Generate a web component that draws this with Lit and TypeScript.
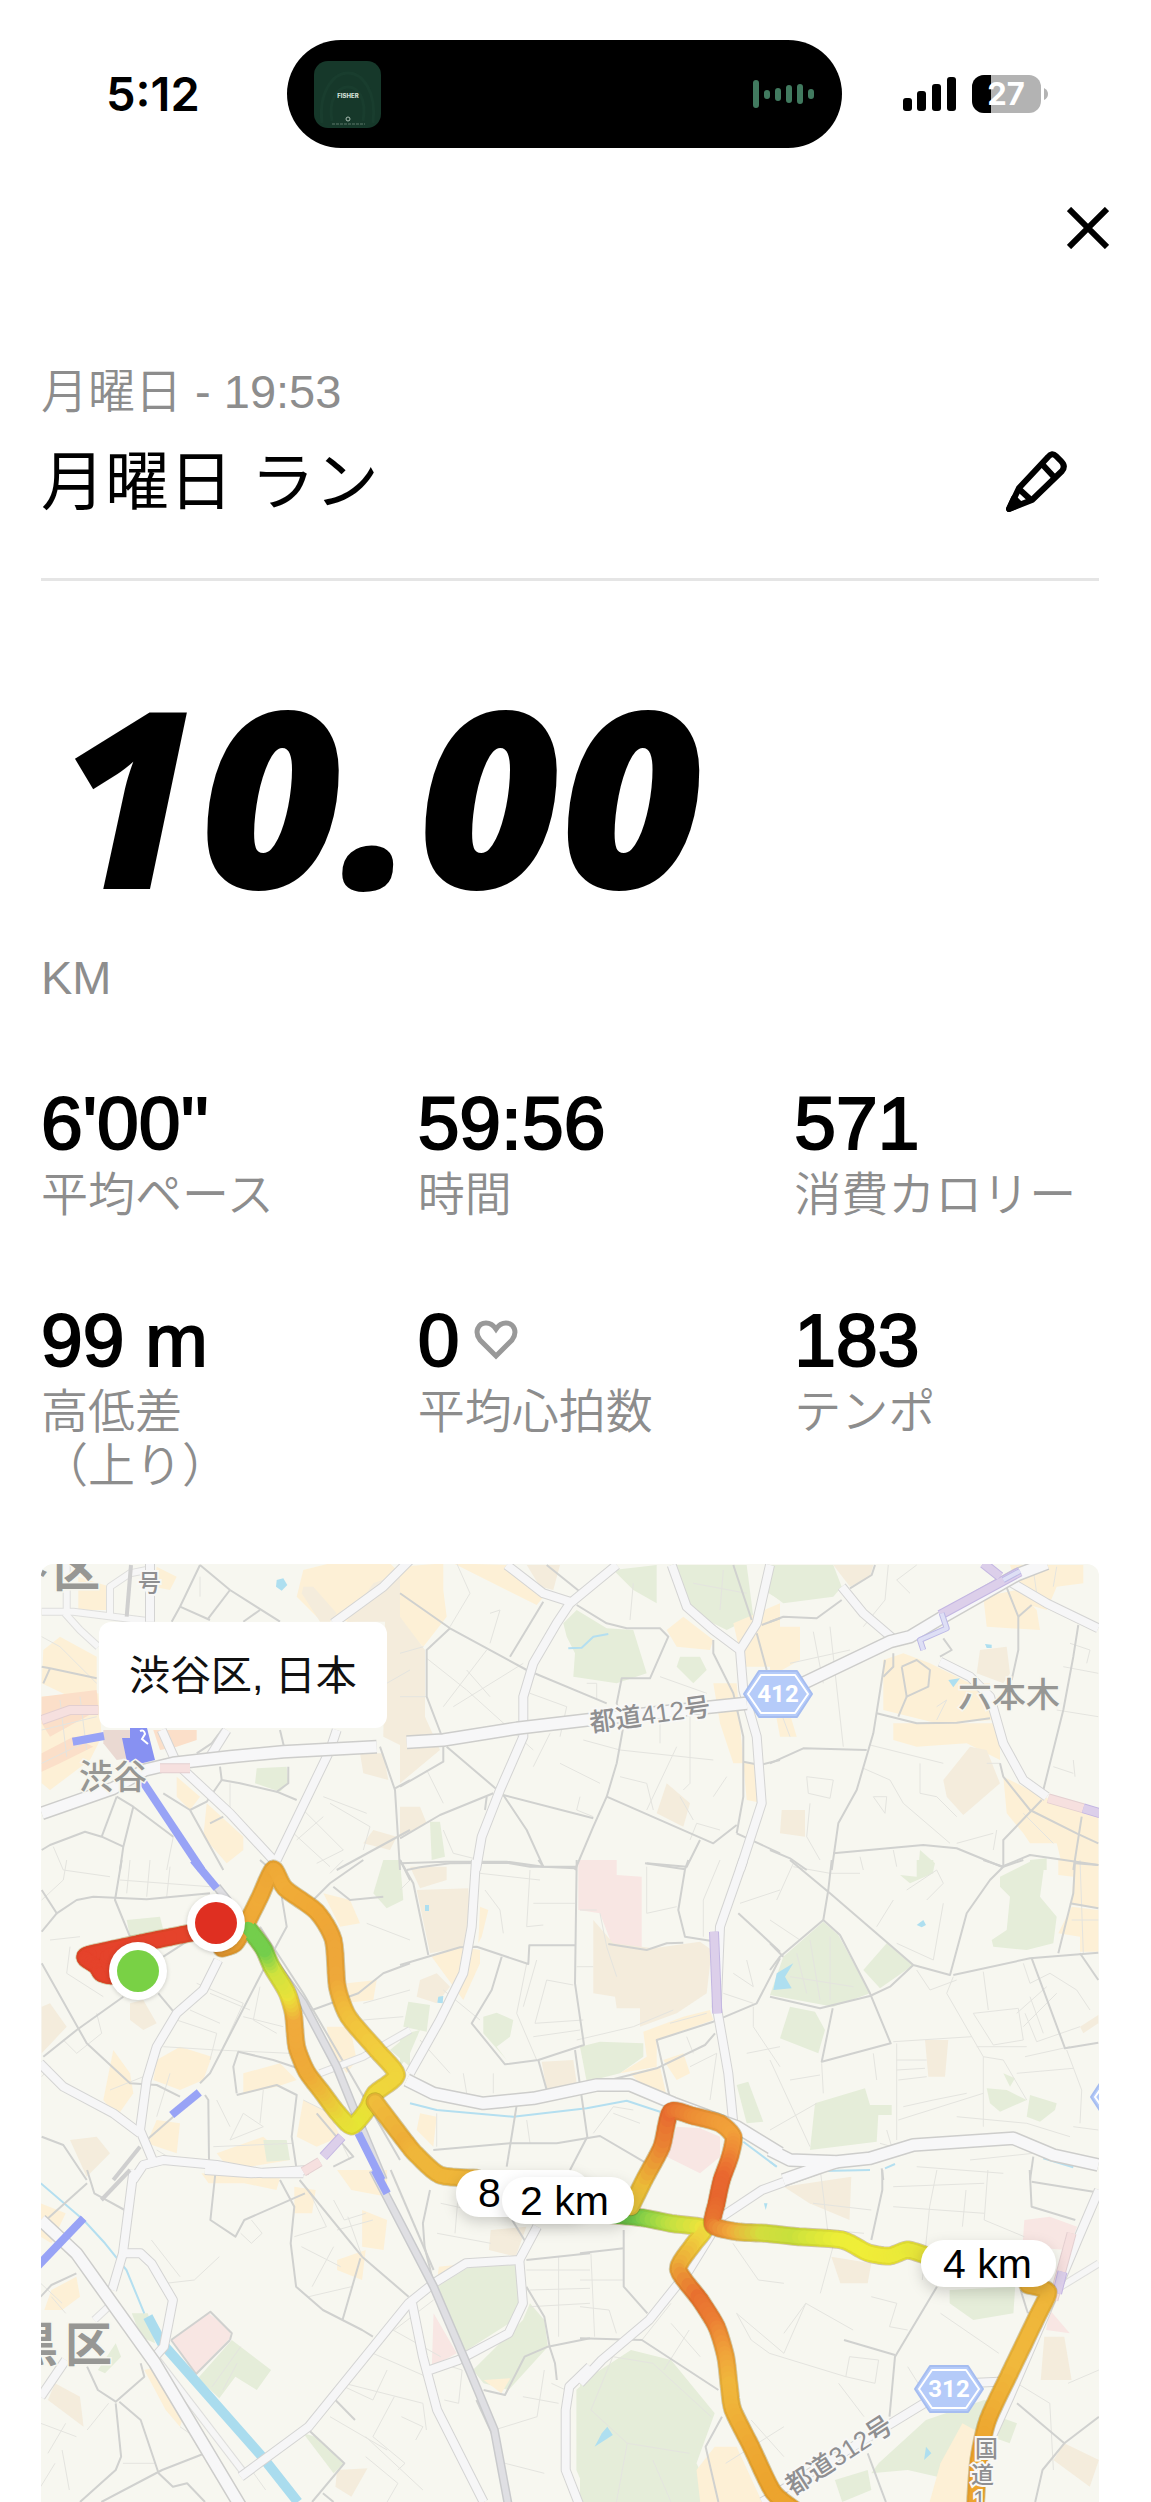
import { LitElement, html, css, svg } from "lit";
import { customElement } from "lit/decorators.js";

type Pt = [number, number];
type Area = [string, string];
type Line = [string, string];

interface Tile {
  x: number;
  y: number;
  sx: number;
  areas: Area[];
  lines: Line[];
}

/* Area fills by land use. */
const LAND: Record<string, string> = {
  y: "#fdf0d6",
  b: "#f4ecdc",
  g: "#e5edd9",
  p: "#f8e6e3",
  o: "#fbdfc9",
  s: "#ead9d2",
  w: "#aedff0",
  v: "#8791f2",
};

/* Line styles: casing colour, casing width, fill colour, fill width. */
const LINE: Record<string, [string, number, string, number]> = {
  n: ["", 0, "#e4e4df", 1],
  m: ["", 0, "#d0d1cf", 2],
  a: ["#dededc", 8, "#f6f6f6", 6],
  c: ["#d4d4d3", 10, "#f6f6f7", 8],
  e: ["#cdcdcb", 14, "#f7f7f8", 11],
  r: ["#c9cacc", 9, "#dfdfe3", 6],
  k: ["", 0, "#cfcfcf", 4],
  u: ["", 0, "#98a3f6", 8],
  l: ["#c3b6e2", 10, "#dccfea", 8],
  t: ["#bdb9e6", 6, "#dedff5", 4],
  q: ["#e3cfd0", 10, "#f6e0df", 8],
  h: ["", 0, "#b4dff0", 2],
  i: ["", 0, "#aadcee", 10],
};

const TILES: Tile[] = [
  {
    x: 30, y: 1550, sx: 3,
    areas: [
      ["y", "820,60 900,40 1080,40 1140,100 1140,200 960,215 860,200 800,140"],
      ["b", "950,215 1030,100 1140,60 1140,600 1060,560 1065,215"],
      ["b", "820,110 850,110 920,190 900,215 870,215 815,130"],
      ["y", "40,300 90,260 200,320 200,420 120,440 35,400"],
      ["y", "35,440 205,430 215,560 180,630 60,720 35,700"],
      ["o", "35,440 200,420 205,480 60,560 35,520"],
      ["o", "35,610 130,560 190,590 90,640 35,665"],
      ["y", "145,80 240,110 230,180 145,180"],
      ["y", "380,50 440,80 420,120 370,110"],
      ["y", "440,680 510,740 480,780 440,740"],
      ["y", "530,760 640,860 640,900 590,940 520,860"],
      ["g", "680,655 770,650 775,700 750,725 675,700"],
      ["w", "740,90 760,85 772,105 755,122 738,110"],
      ["s", "220,540 310,540 330,620 260,630 220,580"],
      ["o", "370,540 500,540 500,570 440,590 390,600"],
      ["b", "990,610 1060,610 1075,690 1000,670"],
      ["b", "1030,840 1100,860 1080,900 1000,880"],
    ],
    lines: [
      ["n", "35,260 90,290 200,400"], ["n", "90,450 110,620"], ["n", "150,440 170,600"], ["n", "35,640 200,560"],
      ["n", "35,540 200,500"], ["n", "900,760 1020,830 1000,900"], ["n", "820,780 940,900 860,940"], ["n", "780,840 900,950"],
      ["n", "880,740 1010,790"], ["n", "600,700 600,790"], ["n", "430,860 410,960"], ["n", "70,890 100,960"],
      ["n", "960,230 1060,330"], ["n", "1070,400 1140,360"], ["n", "510,80 510,140"], ["n", "800,870 880,800"],
      ["m", "510,45 600,120 750,215"], ["m", "510,45 450,170 425,215"], ["m", "450,170 540,210"], ["m", "600,120 535,205"],
      ["m", "690,180 640,215"], ["k", "303,45 290,200"], ["m", "1050,590 1095,720 1110,960"], ["m", "1095,715 1140,690"],
      ["m", "570,650 575,690 630,700 740,725 775,700 775,650"], ["m", "740,725 800,750"],
      ["m", "35,900 60,885 165,845 215,860 280,890"], ["m", "260,740 215,860"], ["m", "310,770 280,890 270,960"],
      ["m", "260,740 310,770 430,860"], ["m", "400,730 480,780 580,960"], ["m", "480,780 530,755 575,690"],
      ["m", "35,350 60,355 200,385"], ["m", "60,355 40,400"], ["m", "540,820 580,800"], ["m", "750,540 762,590"],
      ["m", "500,610 545,580 575,540"], ["m", "920,960 1140,840"],
      ["a", "110,40 110,180"], ["a", "240,200 240,110 300,70 350,60"], ["a", "35,185 130,185 370,215"],
      ["a", "105,190 150,240 205,290"], ["c", "360,40 360,215"],
      ["c", "740,930 900,600 920,540"], ["c", "910,220 1060,110 1140,30"], ["c", "395,540 440,640"], ["c", "590,540 540,620"],
      ["e", "35,790 250,715 345,660 430,640 600,620 760,605 1040,590"], ["c", "450,650 600,790 730,930"],
      ["q", "390,655 480,655"], ["q", "35,510 120,480 205,480"],
      ["u", "335,690 515,960"], ["u", "128,575 222,558"],
    ],
  },
  {
    x: 400, y: 1550, sx: 3,
    areas: [
      ["y", "0,50 130,40 130,120 140,200 70,290 0,220"],
      ["y", "320,45 440,130 410,165 200,60 160,40"],
      ["b", "0,200 75,300 75,500 120,600 0,700"],
      ["b", "380,45 480,45 460,120 420,110"],
      ["g", "530,180 620,235 700,240 740,370 650,400 520,380 525,310 500,260 490,220"],
      ["g", "640,60 770,45 770,160 700,120"],
      ["g", "830,45 1040,45 1060,200 980,240 900,200 860,160"],
      ["g", "1100,45 1140,45 1140,150 1090,120"],
      ["g", "840,320 900,320 920,360 880,400 830,350"],
      ["y", "800,240 850,200 940,270 930,300 830,290"],
      ["y", "1000,220 1140,160 1140,350 1030,350"],
      ["y", "940,400 1010,400 1030,640 1000,640 960,520"],
      ["y", "1030,640 1080,640 1090,760 1040,750"],
      ["b", "800,700 870,760 850,830 770,790"],
      ["b", "0,770 60,770 80,820 0,860"],
      ["g", "90,815 120,815 135,920 95,930"],
    ],
    lines: [
      ["n", "80,325 200,420 400,600"], ["n", "130,470 260,300"], ["n", "160,470 370,340"], ["n", "170,40 210,130 150,230"],
      ["n", "660,680 740,700 760,780"], ["n", "780,490 780,580"], ["n", "870,500 870,700 850,720"], ["n", "550,570 660,600 940,630"],
      ["n", "480,640 600,700"], ["n", "130,840 160,910 240,930"], ["n", "540,740 530,780 580,800"], ["n", "390,430 500,470 480,560"],
      ["n", "200,360 270,440"], ["n", "690,210 700,100"], ["n", "780,380 920,430"], ["n", "830,590 740,780"],
      ["n", "270,190 300,180 270,280"], ["n", "560,400 590,400 590,450"], ["n", "870,870 890,820 960,840"], ["n", "970,60 960,180"],
      ["n", "880,100 1040,130"], ["n", "80,660 130,760"], ["n", "0,310 70,290"], ["n", "0,440 80,440"],
      ["n", "450,550 400,650"], ["n", "840,740 880,810"], ["n", "980,680 940,740"],
      ["h", "505,295 545,293 580,260 625,252"],
      ["m", "440,45 540,125"], ["m", "0,130 150,235 380,360 620,460"],
      ["m", "150,235 80,300 80,440 130,570 130,635 0,710"], ["m", "430,155 330,320"],
      ["m", "530,165 620,220 680,235 780,235 805,260 750,385 665,385 650,460 670,530 650,640 620,740 580,830 525,960"],
      ["m", "140,590 310,735 580,805"], ["m", "310,735 380,840 430,950"], ["m", "0,865 120,795 280,730"],
      ["m", "620,740 940,880 1010,825"], ["m", "1010,850 1140,910"], ["m", "940,270 940,310 1000,430 1030,560 1030,740 1010,850"],
      ["m", "1000,45 1055,210"], ["m", "1070,250 1100,360"], ["m", "1140,205 1085,225"], ["m", "1030,635 1080,645 1140,630"],
      ["m", "0,940 140,935 320,935 430,950 525,955"], ["m", "900,870 860,950 740,940"], ["m", "260,740 255,780"],
      ["c", "320,45 430,130 510,155"], ["c", "228,960 245,860 300,720 370,560 370,440 400,340 470,220 510,160 650,45"],
      ["e", "20,577 130,570 350,535 560,510 1040,460"],
      ["c", "1020,300 1070,220 1110,45"], ["c", "815,45 860,170 940,240 1020,300 1030,420 1070,560 1085,760 1020,960"],
    ],
  },
  {
    x: 770, y: 1550, sx: 3,
    areas: [
      ["g", "0,45 190,45 215,110 190,140 40,160 0,130"],
      ["b", "190,45 310,45 300,80 240,110"],
      ["y", "0,230 90,230 90,330 0,380"],
      ["y", "340,330 400,310 480,340 600,400 660,400 670,510 500,520 340,480"],
      ["y", "370,520 690,520 690,630 590,580 440,590 370,570"],
      ["b", "600,590 650,600 690,700 580,795 530,740 520,690"],
      ["b", "630,300 710,290 720,370 700,400 620,370"],
      ["y", "720,45 940,45 940,100 860,110 830,180 760,160 740,110"],
      ["y", "640,140 740,120 800,180 810,240 650,230"],
      ["y", "700,680 820,740 985,800 985,960 880,960 860,880 780,880 760,850 710,790"],
      ["b", "35,780 105,780 105,860 30,850"],
      ["g", "450,900 495,940 490,960 445,960"],
      ["g", "780,930 830,925 830,960 780,960"],
      ["y", "0,400 50,460 80,560 30,560"],
      ["w", "645,282 665,284 665,294 650,294"],
      ["w", "535,390 570,385 550,412"],
    ],
    lines: [
      ["n", "280,655 360,690 400,760 540,880"], ["n", "300,585 520,640"], ["n", "450,640 450,730 500,740 560,800"],
      ["n", "670,850 560,880"], ["n", "680,840 670,900"], ["n", "180,230 220,590"], ["n", "130,245 160,400"], ["n", "0,400 60,560"],
      ["n", "110,680 190,690 180,745 115,730 110,680"], ["n", "310,740 350,740 345,790 310,740"], ["n", "880,350 985,370"],
      ["n", "860,480 985,500"], ["n", "850,650 910,670"], ["n", "355,45 345,150 280,230"], ["n", "900,280 960,300 950,340"],
      ["n", "60,340 240,300"], ["n", "120,760 110,860 150,930"], ["n", "500,470 530,450 500,510"], ["n", "440,45 380,90 420,130"],
      ["n", "910,630 915,680"], ["n", "270,920 280,960"], ["n", "380,950 370,900"], ["n", "790,60 800,130"], ["n", "860,50 850,110"],
      ["n", "650,640 690,640"], ["n", "985,230 940,225"], ["n", "760,790 850,880"],
      ["m", "0,215 40,200 140,205 215,150"], ["m", "240,115 305,75 315,45"],
      ["m", "345,330 310,550 260,720 205,820 185,960"], ["m", "0,640 100,595 290,600"],
      ["m", "320,490 440,520 560,518 660,505"], ["m", "395,350 440,330 480,360 475,410 410,440 395,350"], ["m", "410,440 385,500"],
      ["m", "370,310 370,350 340,380"], ["m", "520,265 545,300 510,320"], ["m", "705,100 745,200 745,300 725,390"],
      ["m", "785,165 745,200"], ["m", "925,225 910,320 880,480 820,720"], ["m", "690,640 700,680 780,780 920,850 985,880"],
      ["m", "815,750 700,870 700,950"], ["m", "935,800 910,960"], ["m", "190,910 460,885 560,895 695,950 780,915 985,945"],
      ["m", "0,900 60,925 110,960"],
      ["c", "215,110 280,190 380,275"], ["e", "100,400 360,275 420,260 520,200 740,75 830,40"],
      ["c", "720,95 830,160 985,235"], ["c", "510,335 600,380 660,440 700,580 760,690 830,740"],
      ["q", "835,745 940,775"], ["l", "640,40 690,80"], ["l", "510,195 750,65"], ["t", "460,300 450,270 530,235 515,190"],
      ["t", "700,90 750,63"], ["l", "940,775 990,790"],
    ],
  },
  {
    x: 30, y: 1860, sx: 3,
    areas: [
      ["b", "35,440 60,430 110,500 35,580"],
      ["b", "300,430 340,420 380,490 340,510 300,480"],
      ["g", "290,180 390,170 400,210 300,230"],
      ["y", "250,570 300,640 310,700 260,770 220,720"],
      ["y", "380,600 450,560 545,590 520,660 450,690 370,660"],
      ["y", "640,640 750,610 800,660 740,680 640,700"],
      ["y", "890,500 960,500 980,600 950,640 900,560"],
      ["y", "880,100 960,120 990,190 930,200"],
      ["g", "1060,0 1110,0 1120,120 1070,145 1030,100"],
      ["g", "1140,520 1140,620 1080,570"],
      ["y", "380,780 450,790 440,880 350,850"],
      ["b", "120,840 200,830 240,880 170,950"],
      ["y", "560,880 700,830 780,900 600,930"],
      ["g", "700,840 770,840 780,900 710,905"],
      ["y", "950,370 1040,360 1030,420 940,430"],
      ["y", "820,720 900,760 930,830 860,860 800,830"],
    ],
    lines: [
      ["n", "100,30 240,50"], ["n", "35,120 100,60 110,0"], ["n", "300,0 290,100"], ["n", "360,0 350,110"], ["n", "420,20 410,110"],
      ["n", "270,60 540,80"], ["n", "120,260 110,340 220,410"], ["n", "60,240 150,230"], ["n", "440,480 560,520 540,600"],
      ["n", "480,450 570,490"], ["n", "540,400 660,450"], ["n", "500,370 640,430 580,560"], ["n", "640,470 760,500"],
      ["n", "690,380 670,480 740,520"], ["n", "400,560 560,570 780,580"], ["n", "200,460 215,520 140,580 100,540"],
      ["n", "240,690 340,650"], ["n", "640,760 600,840 700,800 640,760"], ["n", "560,720 600,800"], ["n", "700,690 690,790"],
      ["n", "550,860 790,850"], ["n", "820,720 900,760"], ["n", "60,620 35,650"], ["n", "1000,430 1140,390"], ["n", "1010,190 1140,240"],
      ["n", "940,860 960,900"], ["n", "380,870 430,900"], ["n", "900,40 940,0"], ["n", "420,640 380,770"], ["n", "1000,480 1120,470"],
      ["m", "35,90 80,160 140,120 190,110 350,118 540,100"], ["m", "275,0 255,120 300,230"], ["m", "80,160 35,215"],
      ["m", "35,310 170,550 300,670 380,675 450,710"], ["m", "40,590 140,510 280,410"], ["m", "385,400 435,460"],
      ["m", "400,290 470,245"], ["m", "500,0 640,180"], ["m", "690,0 840,130 900,70 1000,0"], ["m", "755,110 770,200 700,330 540,640 510,670"],
      ["m", "525,705 535,720 537,900"], ["m", "620,700 610,620 625,575 730,600 820,630"], ["m", "620,705 740,675 800,705 785,830 800,930"],
      ["m", "820,460 985,400 1060,340 1140,310"], ["m", "910,80 960,120 1060,110"], ["m", "1110,0 1140,60"],
      ["m", "35,830 100,855 170,960"], ["k", "330,860 250,960"], ["m", "430,770 350,840"], ["m", "910,920 970,890 860,760"],
      ["a", "870,640 1000,590 1140,510"],
      ["c", "565,300 520,390 440,460 380,560 350,660 330,810 370,905"], ["c", "30,610 100,680 250,760 330,820"],
      ["c", "310,960 340,915 400,900 560,915 700,940 820,940"],
      ["r", "560,80 640,180 820,430 920,620 985,780 1060,960"],
      ["m", "690,200 820,400 960,640 1110,900"],
      ["u", "490,0 560,85"], ["u", "425,765 508,697"], ["u", "985,820 1055,960"], ["l", "935,830 880,890"], ["q", "870,905 820,935"],
    ],
  },
  {
    x: 400, y: 1860, sx: 3,
    areas: [
      ["p", "535,0 650,0 650,45 725,50 725,265 640,265 600,160 535,150"],
      ["b", "50,90 205,85 210,150 195,260 90,280"],
      ["b", "30,20 140,20 140,60 60,85"],
      ["y", "240,140 265,150 245,230 235,250"],
      ["y", "95,290 180,260 240,270 240,310 190,420"],
      ["b", "60,360 110,340 150,380 110,430 50,410"],
      ["b", "580,180 640,250 760,265 900,245 935,270 920,400 830,460 720,500 720,445 650,445 645,410 580,400"],
      ["g", "25,425 90,435 80,515 10,500"],
      ["g", "0,525 60,510 30,580 0,620"],
      ["g", "250,470 290,458 340,480 330,530 290,560 320,600 250,520"],
      ["b", "425,605 520,600 530,670 440,690"],
      ["g", "540,560 600,545 730,550 730,590 660,640 560,665"],
      ["y", "730,515 850,470 930,450 940,480 770,540 770,620 660,640 740,590"],
      ["y", "690,640 780,620 800,710 720,670"],
      ["y", "790,600 850,580 870,640 830,660"],
      ["g", "1010,675 1045,665 1090,785 1040,790"],
      ["p", "830,800 900,805 960,830 960,890 900,940 800,890"],
      ["y", "60,760 110,770 100,860 50,810"],
      ["w", "75,135 87,135 87,153 75,153"],
      ["w", "115,410 130,408 128,430 112,428"],
    ],
    lines: [
      ["n", "255,90 300,150 310,220"], ["n", "390,30 380,200 430,195"], ["n", "400,130 525,130"], ["n", "380,310 350,460 410,600"],
      ["n", "440,360 520,375"], ["n", "440,360 405,490 550,480"], ["n", "530,540 700,500 820,450"], ["n", "970,400 1060,430"],
      ["n", "1060,440 1060,500 1140,620"], ["n", "740,160 830,140"], ["n", "910,230 910,120 960,0"], ["n", "190,640 200,700"],
      ["n", "280,640 280,700"], ["n", "1040,300 1060,380 1000,340"], ["n", "240,40 420,60"], ["n", "530,320 580,320"],
      ["n", "130,390 240,480"], ["n", "410,300 370,440"], ["n", "600,160 620,260 650,350"], ["n", "810,490 920,460"],
      ["n", "860,530 880,580"], ["n", "60,540 150,640"], ["n", "110,760 110,860"], ["n", "380,780 390,850"], ["n", "640,760 720,790"],
      ["n", "580,820 640,740 700,750"], ["n", "1020,130 1140,90"], ["n", "0,90 30,60"], ["n", "540,150 590,150"], ["n", "400,530 540,510"],
      ["n", "870,620 950,580 930,720"], ["n", "740,20 740,160"], ["n", "1040,580 1140,560"],
      ["h", "30,730 110,750 340,770 560,745 680,722 780,755"], ["h", "1030,845 1130,920"],
      ["m", "20,30 60,22 150,10 320,8 390,20 530,20"], ["m", "0,0 40,70 85,285"], ["m", "0,315 180,262 230,260 385,312 388,256 525,256"],
      ["m", "415,0 430,20"], ["m", "530,0 525,370 552,555 415,600 315,613 215,490 275,390 305,290"], ["m", "415,600 440,690"],
      ["m", "525,570 562,830 510,930"], ["m", "350,735 320,920"], ["m", "100,870 330,850 470,850 600,828 740,910"],
      ["m", "735,10 855,28 835,150 855,230 935,243"], ["m", "865,0 855,28"], ["m", "625,252 740,270 800,250 850,248"],
      ["m", "1015,160 1140,275"], ["m", "1140,295 1070,430 940,485 770,540 810,715"], ["m", "550,680 770,625 915,555 945,520"],
      ["c", "228,0 215,200 190,340 120,480 30,640"], ["c", "1030,0 960,200 950,440 985,640 1000,790"],
      ["e", "20,660 100,700 250,730 400,715 590,675 690,675 820,730 1010,800 1140,880"],
      ["l", "942,215 952,460"],
    ],
  },
  {
    x: 770, y: 1860, sx: 3,
    areas: [
      ["g", "160,185 205,225 300,400 190,440 0,405 40,290"],
      ["g", "350,250 430,315 330,385 280,330"],
      ["g", "390,45 440,50 440,0 490,0 490,40 420,70"],
      ["g", "690,50 790,0 825,0 810,110 860,170 850,250 770,270 670,260 665,240 710,210 720,110 690,80"],
      ["g", "60,440 135,455 165,510 145,580 30,535"],
      ["g", "135,730 285,685 300,735 365,735 365,765 325,765 320,845 120,870"],
      ["b", "465,540 535,540 525,650 475,650"],
      ["g", "650,685 710,690 770,720 690,755 660,730"],
      ["g", "780,705 860,730 855,750 810,785 770,770"],
      ["g", "700,640 735,655 720,680"],
      ["y", "865,0 985,0 985,145 905,135 910,50 865,45"],
      ["y", "905,140 985,150 985,275 930,275 930,230 865,220"],
      ["b", "930,500 985,465 985,490 940,520"],
      ["w", "20,340 70,310 45,350 65,385 10,390"],
      ["w", "440,195 460,180 468,195 455,202"],
    ],
    lines: [
      ["n", "380,550 380,840"], ["n", "550,350 530,400 640,590 700,600 770,720"], ["n", "610,460 745,445 760,540 670,555 610,460"],
      ["n", "310,580 320,660"], ["n", "155,610 160,700"], ["n", "370,545 605,530"], ["n", "0,600 120,860"], ["n", "0,810 140,730"],
      ["n", "385,660 470,650"], ["n", "400,740 490,720 590,700"], ["n", "640,590 640,800"], ["n", "765,460 800,545 930,500"],
      ["n", "765,590 900,560"], ["n", "740,640 910,625"], ["n", "890,570 935,690 930,790"], ["n", "0,180 90,240"], ["n", "20,120 70,10"],
      ["n", "320,200 370,120"], ["n", "490,300 520,130"], ["n", "380,250 490,300"], ["n", "640,700 385,780"], ["n", "640,335 655,450"],
      ["n", "760,310 780,370 840,340 920,390 960,450"], ["n", "780,410 820,520"], ["n", "830,380 740,460"], ["n", "860,400 760,500"],
      ["n", "60,660 150,645"], ["n", "70,20 180,40 270,40"], ["n", "410,90 500,30 520,70 470,120"], ["n", "330,850 365,860 350,810"],
      ["n", "380,600 470,600"], ["n", "380,630 465,625"], ["n", "560,770 770,790 900,830"], ["n", "930,0 940,280"], ["n", "905,180 985,180"],
      ["n", "80,280 110,400"], ["n", "120,240 150,420"], ["n", "180,230 180,420"], ["n", "60,350 250,380"], ["n", "620,560 770,560"],
      ["n", "600,900 790,880"], ["n", "440,920 700,940"], ["n", "910,800 985,810"], ["n", "440,330 480,390 560,360"],
      ["m", "185,0 175,90 160,180 210,225 300,400 362,550 155,605 188,445"], ["m", "60,0 180,100 430,315 540,345 590,160 660,60 700,20 640,0"],
      ["m", "160,180 30,290 0,330"], ["m", "0,410 150,445 300,408 360,380 430,315"], ["m", "0,250 40,290"], ["m", "700,20 760,0"],
      ["m", "550,345 780,295 985,278"], ["m", "915,0 910,100 865,280"], ["m", "900,130 985,145"], ["m", "930,280 985,360"],
      ["m", "785,295 885,565 985,548"], ["m", "915,10 985,15"], ["m", "790,890 780,960"], ["m", "335,925 340,960"],
      ["e", "40,960 140,925 200,905"], ["e", "0,870 60,900 200,905 300,895 430,855 730,835 850,885 985,915"],
      ["n", "140,895 300,885 480,850"],
      ["h", "160,933 300,930"], ["h", "820,895 910,922"], ["h", "345,925 375,912"], ["h", "0,905 20,920"],
    ],
  },
  {
    x: 30, y: 2170, sx: 2.8,
    areas: [
      ["p", "395,510 500,430 560,480 560,505 465,610"],
      ["g", "470,625 565,510 675,600 635,660 575,620 530,685"],
      ["g", "1140,350 1230,290 1360,280 1370,440 1210,550"],
      ["g", "1240,600 1380,450 1400,400 1440,450 1450,530 1340,660 1270,640"],
      ["y", "1270,630 1345,625 1320,670"],
      ["p", "1130,430 1195,550 1125,590"],
      ["g", "1530,660 1568,620 1568,996 1530,900"],
      ["y", "320,600 355,590 430,740 420,770 380,720"],
      ["b", "70,640 140,680 150,770 50,690"],
      ["y", "30,100 100,130 60,220 30,200"],
      ["y", "60,360 130,320 140,380 90,420 40,420"],
      ["y", "740,50 800,60 790,130 740,130"],
      ["y", "860,270 940,240 930,330 860,300"],
      ["y", "930,120 1000,150 990,240 930,230"],
      ["b", "1290,180 1390,170 1360,260 1285,240"],
      ["g", "765,790 800,800 880,880 850,910"],
      ["b", "860,900 945,895 900,980 855,950"],
      ["g", "285,430 330,430 350,520 310,500"],
      ["g", "190,600 240,520 255,560 210,610"],
      ["y", "1145,290 1190,285 1140,330"],
      ["y", "480,10 700,25 690,60 600,40 500,40"],
      ["y", "1000,0 860,0 900,60 1000,80"],
    ],
    lines: [
      ["n", "380,340 460,330 530,260"], ["n", "420,320 340,210"], ["n", "880,640 1100,700 1110,780"], ["n", "1000,600 960,690 880,650"],
      ["n", "1020,680 960,800 1050,880 1030,900"], ["n", "30,760 130,800"], ["n", "940,800 1100,960"], ["n", "1150,580 1210,600 1200,700 1160,690"],
      ["n", "780,60 830,170 740,200"], ["n", "860,180 960,150"], ["n", "1390,300 1568,300"], ["n", "1400,410 1568,400"],
      ["n", "1480,260 1480,500"], ["n", "1300,780 1420,740 1440,600"], ["n", "1380,680 1480,700"], ["n", "110,960 90,840"],
      ["n", "260,880 350,880"], ["n", "760,230 870,290"], ["n", "790,350 850,230"], ["n", "780,380 900,350"], ["n", "620,150 650,190 620,220 590,190"],
      ["n", "60,380 100,430"], ["n", "30,340 90,400"], ["n", "960,550 1110,620"], ["n", "840,740 1000,840"], ["n", "1150,560 1000,470"],
      ["n", "1130,390 1020,480"], ["n", "50,850 100,760"], ["n", "160,780 220,700"], ["n", "890,140 930,260"], ["n", "850,90 880,150 940,130"],
      ["n", "1150,100 1280,130"], ["n", "1140,190 1290,220"], ["n", "1200,60 1190,190"], ["n", "1330,880 1440,910"], ["n", "1400,360 1568,355"],
      ["n", "1460,640 1500,660"], ["n", "510,650 590,530"], ["n", "540,660 580,580"], ["n", "30,950 70,880"], ["n", "420,770 500,830"],
      ["n", "660,960 620,900"], ["n", "940,860 1030,940 1000,996"], ["n", "1040,740 1100,770 1080,810"],
      ["h", "30,40 150,150 210,220 270,300 320,430"],
      ["m", "520,0 505,150 575,200 600,150 770,70"], ["m", "700,30 740,110 730,220 745,350 820,420 930,480 960,500"],
      ["m", "755,30 930,260 1060,380"], ["m", "925,265 875,450"], ["m", "160,0 180,70 265,120"],
      ["m", "1120,60 1100,160 1105,230 1130,340"], ["m", "30,380 60,345 130,310"], ["m", "45,150 160,40"],
      ["m", "160,590 190,660 240,695 320,620 310,580"], ["m", "240,700 255,860 240,900 140,996"],
      ["m", "250,695 310,750 360,910 400,950 440,940 490,996"], ["m", "200,996 370,900 490,850"], ["m", "855,690 910,750"],
      ["m", "780,780 880,880 790,996"], ["m", "820,970 850,996"], ["m", "395,510 505,425 565,490 560,510"], ["m", "395,510 465,612 560,510"],
      ["m", "1390,350 1440,440 1455,530 1470,580 1475,630"], ["m", "1270,660 1330,675 1385,560 1450,530 1568,505"],
      ["m", "1350,150 1390,220"], ["m", "1390,270 1568,250"],
      ["i", "330,440 370,520 650,860 750,996"],
      ["c", "290,0 260,250 230,360"], ["c", "260,250 310,250 340,280 400,390 375,530 350,560"], ["c", "30,680 100,570"],
      ["a", "230,400 180,450"], ["a", "350,560 600,910"], ["c", "490,0 620,10 780,0"],
      ["e", "30,150 130,250 350,580 590,1010"], ["m", "130,250 350,580 590,1010"],
      ["r", "960,0 1130,350 1230,600 1300,780 1340,1010"], ["m", "1010,0 1130,300"], ["m", "1250,690 1310,830 1330,996"],
      ["c", "1070,400 1100,560 1140,720 1270,996"], ["c", "590,920 780,770 1060,400 1130,340 1220,280 1370,270 1420,170"],
      ["c", "1370,270 1380,400 1340,490 1200,570 1120,600"], ["c", "1568,590 1510,650 1500,720 1500,900 1540,1010"],
      ["k", "280,0 200,90"], ["u", "20,290 150,145"], ["u", "965,0 1000,70"],
    ],
  },
  {
    x: 580, y: 2170, sx: 2.746,
    areas: [
      ["b", "560,50 745,20 740,150 630,100"],
      ["b", "690,260 800,280 790,340 715,340"],
      ["g", "1015,360 1195,350 1190,430 1080,450 1015,400"],
      ["p", "1220,150 1290,140 1365,170 1340,240 1215,230"],
      ["p", "1290,420 1345,490 1280,480"],
      ["b", "1275,500 1330,500 1350,630 1265,630"],
      ["g", "0,640 140,540 250,570 370,730 320,880 370,996 0,996"],
      ["g", "1110,690 1150,700 1020,930 900,900 800,910 820,880 950,750"],
      ["y", "1050,760 1100,790 1060,996 960,996 990,880"],
      ["y", "370,830 430,830 500,996 330,996 320,900"],
      ["b", "1330,820 1425,870 1400,950 1300,870"],
      ["g", "1150,740 1200,760 1180,820 1130,800"],
      ["g", "700,930 790,900 800,960 720,996"],
      ["w", "60,790 75,770 90,795 40,830"],
      ["w", "950,830 965,850 945,870"],
      ["w", "505,100 515,100 510,120"],
    ],
    lines: [
      ["n", "430,430 560,550 620,400"], ["n", "520,550 730,620"], ["n", "740,560 820,570 810,640 730,620 740,560"],
      ["n", "710,640 780,740"], ["n", "800,380 870,400 850,470 900,480"], ["n", "990,430 1150,550"], ["n", "300,480 230,600"],
      ["n", "250,460 330,560"], ["n", "0,330 120,330"], ["n", "30,250 40,500"], ["n", "660,0 680,180 780,190"], ["n", "1120,0 1110,150 1220,200"],
      ["n", "980,0 960,110 940,330"], ["n", "860,110 1110,130"], ["n", "640,100 800,120"], ["n", "30,720 90,560 200,580 360,740"],
      ["n", "30,720 130,820 100,996"], ["n", "130,820 300,850"], ["n", "200,870 250,996"], ["n", "470,750 560,860"], ["n", "400,880 560,770"],
      ["n", "420,220 490,330 560,340"], ["n", "430,430 470,510 520,550"], ["n", "860,50 1110,40"], ["n", "1060,60 1050,170"],
      ["n", "0,410 80,420 100,490"], ["n", "170,510 250,400"], ["n", "1200,640 1290,700"], ["n", "1290,700 1300,900"], ["n", "1340,640 1425,600"],
      ["n", "560,490 620,400 750,480"], ["n", "660,370 700,210"], ["n", "900,590 940,660"],
      ["m", "120,180 120,350 185,430"], ["m", "0,250 120,235"], ["m", "0,505 170,510 380,660"], ["m", "390,740 345,830 380,996"],
      ["m", "980,350 865,560 850,740"], ["m", "725,510 865,555"], ["m", "830,0 830,60 800,210"], ["m", "1235,0 1240,110 1360,150"],
      ["m", "1240,35 1410,65"], ["m", "1200,700 1330,820 1270,900 1250,996"], ["m", "1330,820 1425,740"], ["m", "1210,360 1230,430"],
      ["m", "790,850 840,996"], ["a", "1320,350 1425,280"],
      ["c", "0,640 60,570 190,450 300,300 390,140 500,60 650,0"], ["c", "500,996 870,750 960,690 1060,640 1150,635"],
      ["c", "1425,60 1370,200 1320,330 1290,400 1180,680 1110,850"],
      ["q", "1350,190 1300,390"], ["l", "1325,305 1310,370"],
    ],
  },
];

/* Recorded run, split into legs. Each waypoint is tile index, x, y, colour by pace. */
type Way = [number, number, number, string];
const ROUTE: Way[][] = [
  [[3, 500, 215, "#e5432b"], [3, 330, 250, "#e5432b"], [3, 180, 283, "#e5432b"], [3, 167, 295, "#e5432b"], [3, 200, 318, "#e5432b"], [3, 215, 340, "#e5432b"], [3, 250, 345, "#e5432b"], [3, 230, 290, "#e5432b"], [3, 320, 260, "#e5432b"]],
  [[3, 575, 265, "#df9430"], [3, 615, 250, "#e39a30"], [3, 650, 190, "#eea736"], [3, 690, 110, "#f0ab38"], [3, 730, 28, "#eda736"], [3, 765, 85, "#f0ac38"], [3, 860, 155, "#f0a936"], [3, 910, 240, "#eea638"], [3, 922, 380, "#eea83a"], [3, 955, 470, "#f1bd3c"], [3, 1040, 570, "#f2cc3e"], [3, 1100, 645, "#f0d43c"], [3, 1035, 700, "#efd63c"], [3, 1010, 750, "#ecdd38"], [3, 965, 798, "#e6e634"], [3, 920, 755, "#e8dc38"], [3, 875, 695, "#ecc03a"], [3, 830, 635, "#eeac38"], [3, 800, 560, "#efa93a"], [3, 790, 460, "#f0ab3c"], [3, 770, 395, "#ebe23a"], [3, 725, 320, "#cfe23e"], [3, 700, 265, "#74ce4c"], [3, 655, 205, "#74ce4c"]],
  [[3, 1035, 725, "#efc03c"], [3, 1130, 850, "#eeae38"], [4, 50, 885, "#efb63a"], [4, 120, 945, "#efb63a"], [4, 230, 955, "#efb63a"]],
  [[7, 90, 135, "#58bf48"], [7, 170, 143, "#74ca4a"], [7, 250, 160, "#b8df42"], [7, 340, 175, "#ece43c"], [7, 310, 225, "#efcf3e"], [7, 270, 298, "#ecaa38"], [7, 330, 390, "#e8702f"], [7, 375, 470, "#ec7f34"], [7, 400, 560, "#f0a03a"], [7, 410, 650, "#f0b63c"], [7, 420, 720, "#efb43a"], [7, 470, 830, "#eeaa34"], [7, 530, 965, "#eca42e"], [7, 590, 1020, "#eca42e"]],
  [[7, 140, 110, "#e2c83c"], [4, 735, 955, "#ebbb38"], [4, 785, 860, "#ea8c34"], [4, 812, 755, "#e86c30"], [4, 880, 768, "#ec8a34"], [4, 960, 790, "#f09c38"], [4, 1000, 830, "#f2a23a"], [4, 990, 890, "#ee8a36"], [4, 965, 960, "#e9682f"], [7, 375, 100, "#e7662e"], [7, 365, 165, "#e8762f"], [7, 430, 185, "#f0ab3c"], [7, 510, 190, "#d4dd3e"], [7, 600, 200, "#c8e03c"], [7, 720, 210, "#ecee38"], [7, 790, 248, "#f0ee38"], [7, 850, 258, "#eeea38"], [7, 900, 240, "#e9ea38"], [7, 960, 260, "#e3df3a"]],
  [[7, 1230, 345, "#eab036"], [7, 1285, 365, "#edb338"], [7, 1255, 440, "#efb63a"], [7, 1180, 610, "#f0b83c"], [7, 1120, 750, "#eeac34"], [7, 1095, 870, "#eca42e"], [7, 1085, 1020, "#eca42e"]],
];

const place = (t: Tile, x: number, y: number): Pt => [t.x + x / t.sx, t.y + y / 3];

const project = (t: Tile, pts: string) =>
  pts
    .split(" ")
    .map((p) => {
      const [x, y] = p.split(",").map(Number);
      return place(t, x, y).map((n) => n.toFixed(1)).join(",");
    })
    .join(" ");

const mix = (a: string, b: string, k: number) => {
  const ch = (s: string, i: number) => parseInt(s.slice(i, i + 2), 16);
  return `rgb(${[1, 3, 5].map((i) => Math.round(ch(a, i) + (ch(b, i) - ch(a, i)) * k)).join(",")})`;
};

/* Smooth a leg through its waypoints, giving each short step its own colour. */
const smooth = (leg: Way[]) => {
  const p = leg.map(([t, x, y]) => place(TILES[t], x, y));
  const out: { at: Pt; color: string }[] = [];
  const steps = 6;
  for (let i = 0; i < p.length - 1; i++) {
    const [a, b, c, d] = [p[Math.max(i - 1, 0)], p[i], p[i + 1], p[Math.min(i + 2, p.length - 1)]];
    for (let s = 0; s <= steps; s++) {
      const k = s / steps;
      const f = (n: 0 | 1) => {
        const m0 = (c[n] - a[n]) * 0.35;
        const m1 = (d[n] - b[n]) * 0.35;
        return (2 * k ** 3 - 3 * k ** 2 + 1) * b[n] + (k ** 3 - 2 * k ** 2 + k) * m0 + (3 * k ** 2 - 2 * k ** 3) * c[n] + (k ** 3 - k ** 2) * m1;
      };
      out.push({ at: [f(0), f(1)], color: mix(leg[i][3], leg[i + 1][3], k) });
    }
  }
  return out;
};

const STYLE_ORDER = ["n", "h", "m", "i", "a", "c", "r", "e", "k", "q", "l", "t", "u"];

@customElement("run-map")
class RunMap extends LitElement {
  static styles = css`
    :host { display: block; position: relative; overflow: hidden; border-radius: 12px 12px 0 0; }
    .map { display: block; width: 100%; height: auto; font-family: "Liberation Sans", "Noto Sans CJK JP", sans-serif; }
    .line { fill: none; stroke-linejoin: round; }
    .round { stroke-linecap: round; }
    .place { font-weight: 700; fill: #979794; stroke: #f6f6ef; stroke-width: 3px; paint-order: stroke; }
    .big { font-size: 47px; }
    .mid { font-size: 34px; font-weight: 500; }
    .street { font-size: 26px; font-weight: 500; fill: #8f8f91; stroke: #f8f8f6; stroke-width: 4px; paint-order: stroke; }
    .small { font-size: 23px; }
    .shield { font-size: 24px; font-weight: 700; fill: #fff; text-anchor: middle; font-family: Roboto, sans-serif; }
    .km { font-size: 41px; fill: #000; }
    .pill { fill: #fff; filter: drop-shadow(0 5px 7px rgba(0, 0, 0, 0.16)); }
    .pin { filter: drop-shadow(0 1px 2px rgba(0, 0, 0, 0.18)); }
    .chip {
      position: absolute; left: 58px; top: 58px; padding: 25px 30px 23px; border-radius: 12px;
      background: #fff; font: 400 41px/58px "Liberation Sans", "Noto Sans CJK JP", sans-serif;
      color: #111; white-space: nowrap;
    }
  `;

  private lines() {
    return STYLE_ORDER.map((kind) => {
      const [edge, edgeW, fill, w] = LINE[kind];
      const all = TILES.flatMap((t) => t.lines.filter((l) => l[0] === kind).map((l) => project(t, l[1])));
      return svg`
        ${edge ? all.map((p) => svg`<polyline class="line" points=${p} stroke=${edge} stroke-width=${edgeW} />`) : ""}
        ${all.map((p) => svg`<polyline class="line" points=${p} stroke=${fill} stroke-width=${w} />`)}`;
    });
  }

  private leg(way: Way[]) {
    const s = smooth(way);
    const whole = s.map((q) => q.at.map((n) => n.toFixed(1)).join(",")).join(" ");
    return svg`
      <polyline class="line round" points=${whole} stroke="#8a6a10" stroke-opacity=".35" stroke-width="19" />
      ${s.slice(1).map((q, i) => svg`<line class="round" x1=${s[i].at[0]} y1=${s[i].at[1]} x2=${q.at[0]} y2=${q.at[1]} stroke=${q.color} stroke-width="17" />`)}
      <polyline class="line round" points=${whole} stroke="#7a5200" stroke-opacity=".1" stroke-width="17" />
      ${s.slice(1).map((q, i) => svg`<line class="round" x1=${s[i].at[0]} y1=${s[i].at[1]} x2=${q.at[0]} y2=${q.at[1]} stroke=${q.color} stroke-width="13" />`)}`;
  }

  private shield(x: number, y: number, label: string) {
    return svg`<g transform="translate(${x} ${y})">
      <path d="M-19 -23H19L34 0L19 23H-19L-34 0Z" fill="#b5cbf9" stroke="#a6bdf0" stroke-width="2" stroke-linejoin="round" />
      <path d="M-17 -19H17L30 0L17 19H-17L-30 0Z" fill="none" stroke="#fff" stroke-width="2" stroke-linejoin="round" />
      ${label ? svg`<text class="shield" y="8">${label}</text>` : ""}
    </g>`;
  }

  render() {
    return html`
      <svg class="map" viewBox="41 1564 1058 938" role="img" aria-label="渋谷区, 日本">
        <rect x="41" y="1564" width="1058" height="938" fill="#f7f7f0" />
        ${TILES.map((t) => t.areas.map(([kind, pts]) => svg`<polygon points=${project(t, pts)} fill=${LAND[kind]} />`))}
        ${this.lines()}
        <polygon points="130,1728 147,1728 155,1760 143,1763 127,1762 122,1738 130,1738" fill="#8791f2" />
        <path d="M140 1731q4 -2 5 3l-3 5 6 5" fill="none" stroke="#fff" stroke-width="2" />

        <text class="place big" x="1 53" y="1586">谷区</text>
        <text class="street small" x="138" y="1591">号</text>
        <text class="place mid" x="79" y="1789">渋谷</text>
        <text class="place mid" x="958" y="1707">六本木</text>
        <text class="place big" x="11 65" y="2361">黒区</text>
        <text class="street" transform="translate(591 1732) rotate(-8)">都道412号</text>
        <text class="street" transform="translate(793 2496) rotate(-33)">都道312号</text>
        ${this.shield(778, 1694, "412")}
        ${this.shield(949, 2389, "312")}
        ${this.shield(1125, 2097, "")}

        ${ROUTE.map((l) => this.leg(l))}
        <text class="street small"><tspan x="975" y="2457">国</tspan><tspan x="971" y="2483">道</tspan><tspan x="973" y="2508">1</tspan></text>

        <circle class="pin" cx="138" cy="1971" r="29" fill="#fff" />
        <circle cx="138" cy="1971" r="21" fill="#79d145" />
        <circle class="pin" cx="216" cy="1923" r="29" fill="#fff" />
        <circle cx="216" cy="1923" r="21" fill="#df2f21" />

        <rect class="pill" x="456" y="2170" width="135" height="47" rx="23" />
        <text class="km" x="478" y="2207">8</text>
        <rect class="pill" x="502" y="2177" width="132" height="47" rx="23" />
        <text class="km" x="520" y="2215">2 km</text>
        <rect class="pill" x="921" y="2240" width="135" height="47" rx="23" />
        <text class="km" x="943" y="2278">4 km</text>
      </svg>
      <div class="chip">渋谷区, 日本</div>
    `;
  }
}

@customElement("app-root")
class AppRoot extends LitElement {
  static styles = css`
    :host { display: block; background: #fff; color: #000; font-family: "Liberation Sans", "Noto Sans CJK JP", sans-serif; }
    .status { display: grid; grid-template-columns: 287fr 555fr 309fr; align-items: center; padding-top: 40px; }
    .time { padding-left: 106px; font: 600 47px/56px Inter, sans-serif; }
    .island { display: flex; align-items: center; justify-content: space-between; height: 108px; padding: 0 28px 0 27px; box-sizing: border-box; border-radius: 54px; background: #000; }
    .icons { display: flex; align-items: center; gap: 16px; padding-left: 61px; }
    .nav { display: flex; justify-content: flex-end; align-items: center; height: 108px; margin-top: 26px; padding-right: 38px; }
    .icon-button { display: flex; padding: 4px; margin: 0; border: 0; background: none; color: inherit; cursor: pointer; }
    .content { padding: 82px 52px 0 41px; }
    .date { margin: 0; font-size: 47px; line-height: 56px; font-weight: 350; color: #8d8d8d; }
    .title-row { display: flex; align-items: center; justify-content: space-between; margin-top: 22px; padding: 0 28px 56px 0; border-bottom: 3px solid #e5e5e5; }
    .title { margin: 0; font-size: 64px; line-height: 80px; font-weight: 400; }
    .distance { margin: 90px 0 0; padding-left: 16px; font: italic 900 246px/246px "Noto Sans", "Open Sans", sans-serif; }
    .unit { margin: 33px 0 0; font-size: 47px; line-height: 56px; color: #8d8d8d; }
    .stats { display: grid; grid-template-columns: repeat(3, minmax(0, 1fr)); gap: 76px 72px; margin: 75px 0 71px; }
    .stat { display: flex; flex-direction: column-reverse; justify-content: flex-end; gap: 3px; }
    .value { display: flex; align-items: center; gap: 15px; margin: 0; font-size: 75px; line-height: 84px; -webkit-text-stroke: 2px #000; white-space: nowrap; }
    .label { font-size: 47px; line-height: 54px; font-weight: 350; color: #8d8d8d; word-break: keep-all; }
  `;

  private stats = [
    { value: "6'00''", label: ["平均ペース"] },
    { value: "59:56", label: ["時間"] },
    { value: "571", label: ["消費カロリー"] },
    { value: "99 m", label: ["高低差", "（上り）"] },
    { value: "0", label: ["平均心拍数"], heart: true },
    { value: "183", label: ["テンポ"] },
  ];

  render() {
    return html`
      <header>
        <div class="status">
          <div class="time">5:12</div>
          <div class="island">
            <svg viewBox="0 0 67 67" width="67" height="67" aria-hidden="true">
              <rect width="67" height="67" rx="14" fill="#16382a" />
              <path d="M8 62C4 30 20 12 34 12S63 30 59 62M18 60C14 38 24 26 34 26S53 38 49 60" fill="none" stroke="#193d2e" stroke-width="3" />
              <text x="34" y="37" text-anchor="middle" font-family="Inter, sans-serif" font-weight="800" font-size="6" fill="#d5e0d9">FISHER</text>
              <circle cx="34" cy="58" r="2" fill="none" stroke="#a9bdb2" stroke-width="1" />
              <path d="M18 63H51" stroke="#5d786b" stroke-width="1" stroke-dasharray="3 1" />
            </svg>
            <svg viewBox="0 0 62 30" width="62" height="30" aria-hidden="true" stroke="#417a5f" stroke-width="6" stroke-linecap="round">
              <path d="M4 4V26M15 14V17M26 12V19M37 9V21M48 8V22M59 13V17" />
            </svg>
          </div>
          <div class="icons">
            <svg viewBox="0 0 53 36" width="53" height="36" role="img" aria-label="電波">
              <rect x="0" y="22" width="9" height="13" rx="3" /><rect x="14" y="15" width="9" height="20" rx="3" />
              <rect x="29" y="8" width="9" height="27" rx="3" /><rect x="44" y="1" width="9" height="34" rx="3" />
            </svg>
            <svg viewBox="0 0 77 38" width="77" height="38" role="img" aria-label="バッテリー 27%">
              <rect width="69" height="38" rx="12" fill="#b3b3b3" />
              <path d="M19 0V38H12A12 12 0 0 1 0 26V12A12 12 0 0 1 12 0Z" />
              <path d="M72 13Q76 15 76 19T72 25Z" fill="#b3b3b3" />
              <text x="34" y="30" text-anchor="middle" font-family="Inter, sans-serif" font-weight="700" font-size="31" fill="#fff">27</text>
            </svg>
          </div>
        </div>
        <nav class="nav">
          <button class="icon-button" aria-label="閉じる">
            <svg viewBox="0 0 42 42" width="42" height="42" stroke="#000" stroke-width="6"><path d="M2 2L40 40M40 2L2 40" /></svg>
          </button>
        </nav>
      </header>
      <main class="content">
        <p class="date">月曜日 - 19:53</p>
        <div class="title-row">
          <h1 class="title">月曜日 ラン</h1>
          <button class="icon-button" aria-label="編集">
            <svg viewBox="0 0 62 62" width="62" height="62" fill="none" stroke="#000" stroke-width="6" stroke-linejoin="round">
              <path d="M4 58L14 37L43 6Q47 1 51 5L56 10Q61 15 57 20L27 49Z" />
              <path d="M37 13L49 26M14 38L26 49" />
              <path d="M4 58L9 47L15 53Z" fill="#000" />
            </svg>
          </button>
        </div>
        <p class="distance">10.00</p>
        <p class="unit">KM</p>
        <dl class="stats">
          ${this.stats.map(
            (s) => html`<div class="stat">
              <dt class="label">${s.label.map((part, i) => html`${i ? html`<wbr />` : ""}${part}`)}</dt>
              <dd class="value">${s.value}${s.heart
                ? html`<svg viewBox="0 0 44 40" width="44" height="40" fill="none" stroke="#999" stroke-width="5" aria-hidden="true">
                    <path d="M22 36L6 20C0 12 4 3 12 3C17 3 20 6 22 9C24 6 27 3 32 3C40 3 44 12 38 20Z" />
                  </svg>`
                : ""}</dd>
            </div>`
          )}
        </dl>
        <run-map></run-map>
      </main>
    `;
  }
}
